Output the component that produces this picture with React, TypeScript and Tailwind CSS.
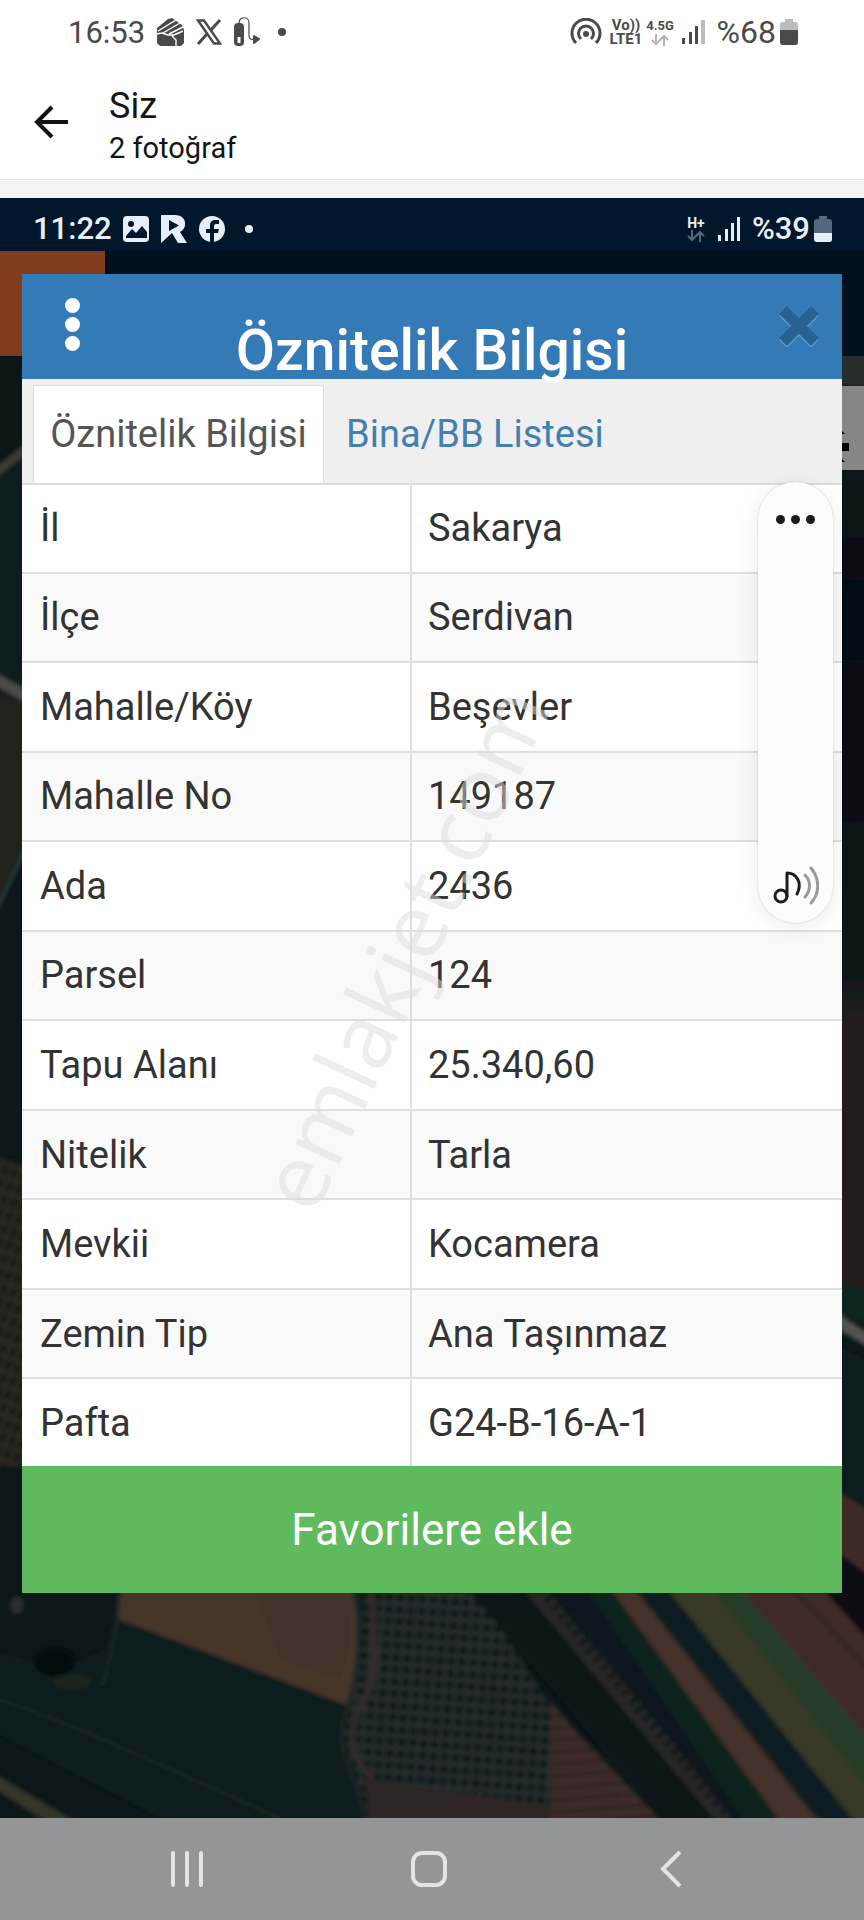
import React, { useState } from 'react';

const rows = [
  { label: 'İl', value: 'Sakarya' },
  { label: 'İlçe', value: 'Serdivan' },
  { label: 'Mahalle/Köy', value: 'Beşevler' },
  { label: 'Mahalle No', value: '149187' },
  { label: 'Ada', value: '2436' },
  { label: 'Parsel', value: '124' },
  { label: 'Tapu Alanı', value: '25.340,60' },
  { label: 'Nitelik', value: 'Tarla' },
  { label: 'Mevkii', value: 'Kocamera' },
  { label: 'Zemin Tip', value: 'Ana Taşınmaz' },
  { label: 'Pafta', value: 'G24-B-16-A-1' },
];

function DataArrows({ className }: { className: string }) {
  return (
    <svg width="18" height="12" viewBox="0 0 18 12" fill="none" stroke="currentColor" strokeWidth="2" className={className}>
      <path d="M5 0v10M1 6l4 4 4-4M13 12V2M9 6l4-4 4 4" />
    </svg>
  );
}

function PhoneStatus() {
  return (
    <div className="flex h-16 items-center justify-between pl-[68px] pr-[66px] text-[#4a4a4a]">
      <div className="flex items-center">
        <span className="w-[88px] text-[31px] leading-none">16:53</span>
        <svg width="28" height="28" viewBox="0 0 28 28" className="shrink-0">
          <path d="M1 10 12 1l4-1 10 7 2 5v13l-3 3H4l-3-3z" fill="#4a4a4a" />
          <path d="M2 13 20 2M7 15 24 5M13 16l14-7M0 16l6-1 6 2h6l9-4M16 18l4 4v6" fill="none" stroke="#fff" strokeWidth="1.400" />
        </svg>
        <svg width="26" height="26" viewBox="0 0 26 26" fill="none" stroke="currentColor" className="ml-3 shrink-0">
          <path d="M2 1.500h6L24 24.500h-6z" strokeWidth="2.400" />
          <path d="M24 1 14.500 11.500M11 15 2 25" strokeWidth="3" />
        </svg>
        <svg width="26" height="30" viewBox="0 0 26 30" className="ml-3 shrink-0">
          <rect x="0" y="6" width="10" height="23" rx="4" fill="currentColor" />
          <rect x="3.500" y="20" width="3" height="6" fill="#fff" />
          <path d="M5 6c0-7 10-7 10 0v12c0 4 2 5 5 4" fill="none" stroke="currentColor" strokeWidth="1.200" />
          <path d="m20 19 5 3-5 4z" fill="currentColor" stroke="currentColor" strokeWidth="2" strokeLinejoin="round" />
        </svg>
        <span className="ml-[18px] size-2 rounded-full bg-[#4a4a4a]" />
      </div>
      <div className="flex items-center">
        <svg width="32" height="28" viewBox="0 0 32 28" fill="none" stroke="currentColor" strokeWidth="3">
          <path d="M6 25a14 14 0 1 1 20 0" />
          <path d="M11 21a7.500 7.500 0 1 1 10 0" />
          <circle cx="16" cy="16" r="3" fill="currentColor" stroke="none" />
        </svg>
        <div className="ml-1.5 flex w-9 flex-col items-center text-[15px] font-bold leading-[14px]">
          <span>Vo))</span>
          <span>LTE1</span>
        </div>
        <div className="ml-0.5 flex w-7 flex-col items-center gap-px text-[13px] font-bold leading-[14px]">
          <span>4.5G</span>
          <DataArrows className="text-[#b5b5b5]" />
        </div>
        <svg width="24" height="24" viewBox="0 0 24 24" fill="currentColor" className="ml-2">
          <path d="M0 18h3v6H0zM7 12h3v12H7zM13 6h3v18h-3z" />
          <path d="M19 0h4v24h-4z" fill="#bcbcbc" />
        </svg>
        <span className="ml-2 w-[62px] text-right text-[32px] leading-none">%68</span>
        <svg width="18" height="26" viewBox="0 0 18 26" className="ml-1">
          <path d="M5 0h8v3h2a3 3 0 0 1 3 3v17a3 3 0 0 1-3 3H3a3 3 0 0 1-3-3V6a3 3 0 0 1 3-3h2z" fill="#bcbcbc" />
          <path d="M0 11h18v12a3 3 0 0 1-3 3H3a3 3 0 0 1-3-3z" fill="#4a4a4a" />
        </svg>
      </div>
    </div>
  );
}

function PhotoHeader() {
  return (
    <header className="flex h-[116px] items-start border-b border-[#e4e2e0] pl-8 text-[#111518]">
      <button aria-label="Geri" className="mt-10 w-[77px]">
        <svg width="38" height="36" viewBox="0 0 38 36" fill="none" stroke="currentColor" strokeWidth="4">
          <path d="M36 18H5M20 3 5 18l15 15" />
        </svg>
      </button>
      <div className="pt-5">
        <h1 className="text-[36px] leading-[44px]">Siz</h1>
        <p className="text-[29px] leading-[40px]">2 fotoğraf</p>
      </div>
    </header>
  );
}

function InnerStatus() {
  return (
    <div className="relative flex h-[53px] items-center justify-between bg-[#02172b] pl-[33px] pr-8 pt-2 text-[#e6eefa]">
      <div className="flex items-center">
        <span className="w-[90px] text-[31px] font-medium leading-none">11:22</span>
        <svg width="26" height="26" viewBox="0 0 26 26" className="shrink-0">
          <rect width="26" height="26" rx="4" fill="currentColor" />
          <circle cx="8" cy="8" r="3" fill="#02172b" />
          <path d="M3 20 9 13l4 4 6-7 5 6v6H3z" fill="#02172b" />
        </svg>
        <svg width="26" height="28" viewBox="0 0 26 28" className="ml-3 shrink-0" fill="currentColor">
          <path d="M0 0h14c12 0 13 13 5 17l7 11h-9l-6-10-11 10V0zM8 5v11l10-5.500z" fillRule="evenodd" />
        </svg>
        <svg width="26" height="26" viewBox="0 0 26 26" className="ml-3 shrink-0">
          <circle cx="13" cy="13" r="13" fill="currentColor" />
          <path d="M11 26v-9H7v-4h4v-3c0-4 2-6 5-6h4v4h-2c-2 0-3 .5-3 2v3h5l-1 4h-4v9z" fill="#02172b" />
        </svg>
        <span className="ml-5 size-2 rounded-full bg-[#e6eefa]" />
      </div>
      <div className="flex items-center">
        <div className="flex w-5 flex-col items-center text-[14px] font-bold leading-[14px]">
          <span>H+</span>
          <DataArrows className="text-[#56677a]" />
        </div>
        <svg width="24" height="24" viewBox="0 0 24 24" fill="currentColor" className="ml-3">
          <path d="M0 18h3v6H0zM7 12h3v12H7zM13 6h3v18h-3zM19 0h3v24h-3z" />
        </svg>
        <span className="ml-2 w-[60px] text-right text-[31px] font-medium leading-none">%39</span>
        <svg width="18" height="26" viewBox="0 0 18 26" className="ml-1">
          <path d="M5 0h8v3h2a3 3 0 0 1 3 3v17a3 3 0 0 1-3 3H3a3 3 0 0 1-3-3V6a3 3 0 0 1 3-3h2z" fill="#55677a" />
          <path d="M0 17h18v6a3 3 0 0 1-3 3H3a3 3 0 0 1-3-3z" fill="#e6eefa" />
        </svg>
      </div>
    </div>
  );
}

// Darkened aerial view of the fields behind the dialog
function FieldMap() {
  return (
    <svg viewBox="0 198 864 1620" preserveAspectRatio="none" className="absolute inset-0 size-full">
      <defs>
        <pattern id="orchard" width="11" height="12" patternUnits="userSpaceOnUse" patternTransform="rotate(4)">
          <rect width="11" height="12" fill="#252f2d" />
          <circle cx="5" cy="6" r="4" fill="#0b1517" />
        </pattern>
        <pattern id="furrows" width="16" height="12" patternUnits="userSpaceOnUse" patternTransform="rotate(-5)">
          <rect width="16" height="12" fill="#3d2c29" />
          <path d="M0 6h16" stroke="#2b2321" strokeWidth="3" />
        </pattern>
        <pattern id="crops" width="10" height="14" patternUnits="userSpaceOnUse" patternTransform="rotate(20)">
          <rect width="10" height="14" fill="#2a2522" />
          <rect x="2" y="2" width="5" height="8" fill="#151413" />
        </pattern>
        <linearGradient id="rightEdge" x1="0" y1="0" x2="0" y2="1">
          <stop offset="0" stopColor="#0c1618" />
          <stop offset="0.15" stopColor="#060e16" />
          <stop offset="0.6" stopColor="#0a1418" />
          <stop offset="0.67" stopColor="#221f1d" />
          <stop offset="1" stopColor="#241e1c" />
        </linearGradient>
        <filter id="soft" x="-5%" y="-5%" width="110%" height="110%">
          <feGaussianBlur stdDeviation="2" />
        </filter>
      </defs>
      <rect y="198" width="864" height="1620" fill="#0b1719" />
      <rect y="251" width="864" height="106" fill="#00101c" />
      <g filter="url(#soft)">
        <path d="M-8 357h38v100l-38 20z" fill="#101817" />
        <path d="M-8 476 30 446" stroke="#3c3e38" strokeWidth="8" />
        <path d="M-8 485 30 455v240l-38-20z" fill="#071a1c" />
        <path d="M-8 671 30 692v14L-8 684z" fill="#4c4c49" />
        <path d="M-8 690 30 708v130l-38 80z" fill="#20221d" />
        <path d="M-8 920 30 840" stroke="#27403f" strokeWidth="3" />
        <path d="M-8 1155l38 12v300H-8z" fill="url(#crops)" />
        <path d="M836 350h40v36h-40z" fill="#252d2a" />
        <path d="M836 470h40v820h-40z" fill="url(#rightEdge)" />
        <path d="M836 1280l40 16v30l-40-14z" fill="#0d2620" />
        <path d="M836 1312l40 26v14l-40-24z" fill="#55534f" />
        <path d="M836 1345l40 20v150l-40-24z" fill="#0d1f1e" />
        <path d="M836 1490l40 26v160l-40-40z" fill="#3e2c28" />
        <path d="M120 1580h230c12 50 10 90-4 125L115 1618z" fill="#47362c" />
        <path d="M250 1580h95c10 40 8 60-4 100l-60-20z" fill="#423229" />
        <path d="M115 1618 346 1705l-8 30 40 93H180L-8 1730v-80l68 20 45-20z" fill="#0c1c1f" />
        <path d="M0 1700c90 30 170 70 280 118" fill="none" stroke="#182321" strokeWidth="5" />
        <path d="M-8 1772 80 1824H50L-8 1788z" fill="#35362b" />
        <ellipse cx="55" cy="1662" rx="20" ry="14" fill="#03090c" />
        <ellipse cx="72" cy="1682" rx="20" ry="8" fill="#1a211b" />
        <ellipse cx="17" cy="1605" rx="7" ry="9" fill="#2a2d30" />
        <path d="M120 1590c-3 30-6 60-18 96" fill="none" stroke="#1c2827" strokeWidth="3" />
        <path d="M365 1580h105l80 125v120H372l-30-90 14-50z" fill="url(#orchard)" />
        <path d="M370 1580c6 70 10 100-12 130-12 30-4 50 16 70" fill="none" stroke="#322b2e" strokeWidth="7" />
        <path d="M355 1580c8 60 2 100-8 130-16 40 10 60 20 118" fill="none" stroke="#1d2726" strokeWidth="4" />
        <path d="M365 1780l185 25v25H370z" fill="#2f2825" />
        <path d="M550 1700l25 30 95 100H550z" fill="url(#furrows)" />
        <path d="M460 1580h70l206 248h-70l-94-115z" fill="#081317" />
        <path d="M527 1580 733 1828" stroke="#282625" strokeWidth="18" />
        <path d="M534 1580 740 1828" stroke="#0d1519" strokeWidth="12" strokeDasharray="4 7" />
        <path d="M545 1580h70l185 248h-60z" fill="#07131a" />
        <path d="M580 1580h30l185 248h-46z" fill="#11211f" />
        <path d="M604 1580h24l196 248h-39z" fill="#443129" />
        <path d="M630 1580h34l196 248h-34z" fill="#0b1f20" />
        <path d="M660 1580h76l140 150v98h-16z" fill="#393725" />
        <path d="M704 1580h28l144 160v60z" fill="#273b28" />
        <path d="M732 1580h110l34 60v108z" fill="#402c27" />
        <path d="M784 1580 870 1670" stroke="#30231f" strokeWidth="4" />
        <path d="M815 1580l20-30 41 30v70z" fill="#0b1014" />
      </g>
      <rect y="251" width="105" height="105" fill="#823b1c" />
      <rect x="836" y="251" width="28" height="105" fill="#00101c" />
      <rect x="836" y="386" width="28" height="84" fill="#868686" />
      <path d="M842 431 845 434H842zM842 443h7v8h-7zM842 459l3 3h-3z" fill="#000" />
    </svg>
  );
}

function VolumePanel() {
  return (
    <div className="absolute right-[31px] top-[284px] flex h-[441px] w-[75px] flex-col items-center justify-between rounded-full bg-[#fcfcfc] pb-[18px] pt-8 shadow-[0_4px_24px_rgba(0,0,0,0.08),0_0_2px_rgba(0,0,0,0.2)]">
      <button aria-label="Diğer" className="flex gap-1.5 pt-px">
        <span className="size-[9px] rounded-full bg-[#1c1c1c]" />
        <span className="size-[9px] rounded-full bg-[#1c1c1c]" />
        <span className="size-[9px] rounded-full bg-[#1c1c1c]" />
      </button>
      <button aria-label="Medya sesi">
        <svg width="46" height="40" viewBox="0 0 46 40" fill="none" strokeWidth="3" strokeLinecap="round">
          <g stroke="#1c1c1c">
            <circle cx="8" cy="31" r="6" />
            <path d="M14 31V8c9 0 16 9 10 21" strokeLinejoin="round" />
          </g>
          <path d="M32 10c6 6 6 15 0 22" stroke="#999" />
          <path d="M38 3c9 11 9 25 0 35" stroke="#999" />
        </svg>
      </button>
    </div>
  );
}

function ParcelDialog() {
  const [tab, setTab] = useState('info');

  return (
    <section className="relative mx-[22px] mt-[23px] bg-white">
      <div className="relative flex h-[105px] items-end justify-center bg-[#337ab7]">
        <button aria-label="Menü" className="absolute left-[43px] top-6 flex flex-col gap-1">
          <span className="size-[15px] rounded-full bg-white" />
          <span className="size-[15px] rounded-full bg-white" />
          <span className="size-[15px] rounded-full bg-white" />
        </button>
        <h2 className="text-[57px] font-medium leading-[56px] text-white">Öznitelik Bilgisi</h2>
        <button aria-label="Kapat" className="absolute right-[22px] top-[31px]">
          <svg width="42" height="42" viewBox="0 0 42 42" fill="none" strokeWidth="11">
            <path d="m5 7 32 32M37 7 5 39" stroke="#5b9bd0" />
            <path d="m5 5 32 32M37 5 5 37" stroke="#296292" />
          </svg>
        </button>
      </div>

      <div role="tablist" className="flex h-[106px] items-end border-b-2 border-[#dddddd] bg-[#efefef] pl-[11px]">
        <button
          role="tab"
          aria-selected={tab === 'info'}
          onClick={() => setTab('info')}
          className="h-[98px] w-[291px] border border-b-0 border-[#dddddd] bg-white text-[38px] text-[#555555]"
        >
          Öznitelik Bilgisi
        </button>
        <button
          role="tab"
          aria-selected={tab === 'list'}
          onClick={() => setTab('list')}
          className="h-[98px] px-[22px] text-[38px] text-[#447fb3]"
        >
          Bina/BB Listesi
        </button>
      </div>

      <table className="h-[981px] w-full table-fixed border-collapse text-left text-[38px] leading-[44px] text-[#333333]">
        <tbody>
          {rows.map(row => (
            <tr key={row.label} className="border-b-2 border-[#dfdfdf] last:border-b-0 even:bg-[#f9f9f9]">
              <th scope="row" className="w-[389px] border-r-2 border-[#dfdfdf] px-[18px] font-normal">{row.label}</th>
              <td className="px-4">{row.value}</td>
            </tr>
          ))}
        </tbody>
      </table>

      <button className="h-[127px] w-full bg-[#5fb95d] text-[44px] text-white">Favorilere ekle</button>
    </section>
  );
}

function NavBar() {
  return (
    <nav className="flex h-[102px] items-center bg-[#939597] pl-[66px] pr-[72px] text-[#e4e4e4]">
      <button aria-label="Son uygulamalar" className="flex flex-1 justify-center">
        <svg width="36" height="38" viewBox="0 0 36 38" fill="none" stroke="currentColor" strokeWidth="4" strokeLinecap="round">
          <path d="M4 3v32M18 3v32M32 3v32" />
        </svg>
      </button>
      <button aria-label="Ana ekran" className="flex flex-1 justify-center">
        <svg width="38" height="38" viewBox="0 0 38 38" fill="none" stroke="currentColor" strokeWidth="4">
          <rect x="3" y="3" width="32" height="32" rx="9" />
        </svg>
      </button>
      <button aria-label="Geri" className="flex flex-1 justify-center">
        <svg width="24" height="38" viewBox="0 0 24 38" fill="none" stroke="currentColor" strokeWidth="4">
          <path d="M21 2 4 19l17 17" />
        </svg>
      </button>
    </nav>
  );
}

export default function App() {
  return (
    <div className="flex min-h-screen flex-col bg-white font-['Roboto','Liberation_Sans',sans-serif]">
      <PhoneStatus />
      <PhotoHeader />
      <main className="flex-1 border-t-[18px] border-[#f5f3f1]">
        <div className="relative pb-[225px]">
          <FieldMap />
          <InnerStatus />
          <ParcelDialog />
          <VolumePanel />
          <div className="pointer-events-none absolute inset-x-0 top-[704px] flex justify-center pr-[60px]">
            <span className="-rotate-[65deg] whitespace-nowrap font-['Open_Sans',sans-serif] text-[90px] leading-none text-[#dcdcdc]/50">
              emlakjet.com
            </span>
          </div>
        </div>
      </main>
      <NavBar />
    </div>
  );
}
